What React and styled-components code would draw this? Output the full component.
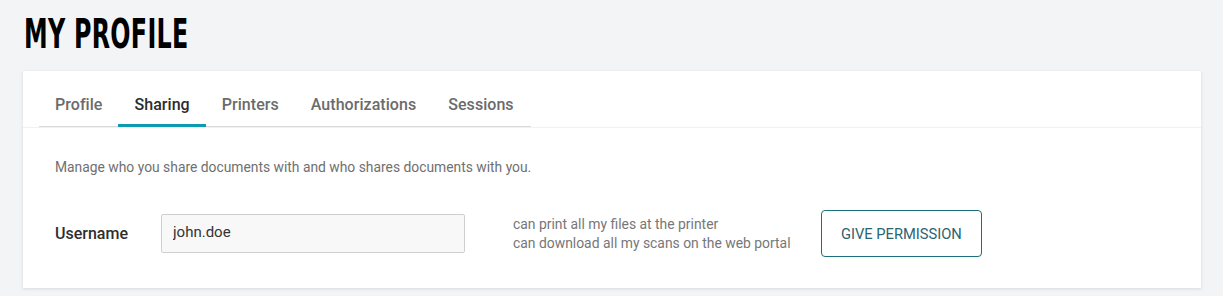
import React, {useState} from 'react'
import styled, {createGlobalStyle} from 'styled-components'

const GlobalStyle = createGlobalStyle`
  body {
    margin: 0;
    background: #f3f4f6;
    font-family: Roboto, "Liberation Sans", sans-serif;
  }
`

const tabs = ['Profile', 'Sharing', 'Printers', 'Authorizations', 'Sessions']

function App() {
  const [active, setActive] = useState(1)

  return (
    <Page>
      <GlobalStyle />
      <Title>MY PROFILE</Title>

      <Card>
        <CardHeader>
          <TabBar>
            {tabs.map((t, i) => (
              <Tab key={t} active={i === active} onClick={() => setActive(i)}>{t}</Tab>
            ))}
          </TabBar>
        </CardHeader>

        <CardBody>
          <Intro>Manage who you share documents with and who shares documents with you.</Intro>

          <FormRow>
            <Label>Username</Label>
            <Input defaultValue="john.doe" />
            <Rights>
              <span>can print all my files at the printer</span>
              <span>can download all my scans on the web portal</span>
            </Rights>
            <Button>Give permission</Button>
          </FormRow>
        </CardBody>
      </Card>
    </Page>
  )
}

export default App

const Page = styled.div`
  padding: 12px 22px 7px 23px;
`

const Title = styled.h1`
  margin: 0 0 14px 1px;
  height: 45px;
  font-family: "DejaVu Sans", sans-serif;
  font-weight: 700;
  font-size: 41px;
  line-height: 45px;
  letter-spacing: 0.5px;
  color: #000;
  transform: scaleX(0.58);
  transform-origin: left center;
  white-space: nowrap;
`

const Card = styled.div`
  background: #fff;
  box-shadow: 0 1px 3px rgba(40, 60, 90, 0.15);
`

const CardHeader = styled.div`
  padding: 0 16px;
  border-bottom: 1px solid #f1f1f1;
`

const TabBar = styled.ul`
  display: flex;
  margin: 0;
  padding: 0;
  list-style: none;
  width: 492px;
  border-bottom: 1px solid #dadada;
`

const Tab = styled.li`
  position: relative;
  padding: 24px 16px 12px;
  font-size: 16px;
  line-height: 19px;
  font-weight: 500;
  letter-spacing: 0.05px;
  color: ${p => p.active ? '#2c2c2c' : '#6b6b6b'};
  cursor: pointer;

  &::after {
    content: '';
    display: ${p => p.active ? 'block' : 'none'};
    position: absolute;
    left: 0;
    right: 0;
    bottom: -1px;
    height: 3px;
    background: #0e9bb0;
  }
`

const CardBody = styled.div`
  padding: 30px 32px 31px;
`

const Intro = styled.p`
  margin: 0 0 34px;
  font-size: 13.85px;
  line-height: 18px;
  color: #707070;
`

const FormRow = styled.div`
  display: flex;
  align-items: center;
`

const Label = styled.span`
  width: 106px;
  font-size: 16px;
  font-weight: 500;
  color: #2e2e2e;
`

const Input = styled.input`
  box-sizing: border-box;
  width: 304px;
  height: 39px;
  padding: 0 11px 4px;
  background: #f8f8f8;
  border: 1px solid #cfcfcf;
  border-radius: 2px;
  font-family: inherit;
  font-size: 15px;
  color: #333;
  outline: none;
`

const Rights = styled.div`
  display: flex;
  flex-direction: column;
  margin-left: 48px;
  width: 308px;
  font-size: 13.9px;
  line-height: 19px;
  color: #777;
`

const Button = styled.button`
  box-sizing: border-box;
  height: 47px;
  padding: 0 19px;
  background: #fff;
  border: 1px solid #1c6f7e;
  border-radius: 4px;
  font-family: inherit;
  font-size: 14.7px;
  text-transform: uppercase;
  color: #2b6472;
  cursor: pointer;
`
